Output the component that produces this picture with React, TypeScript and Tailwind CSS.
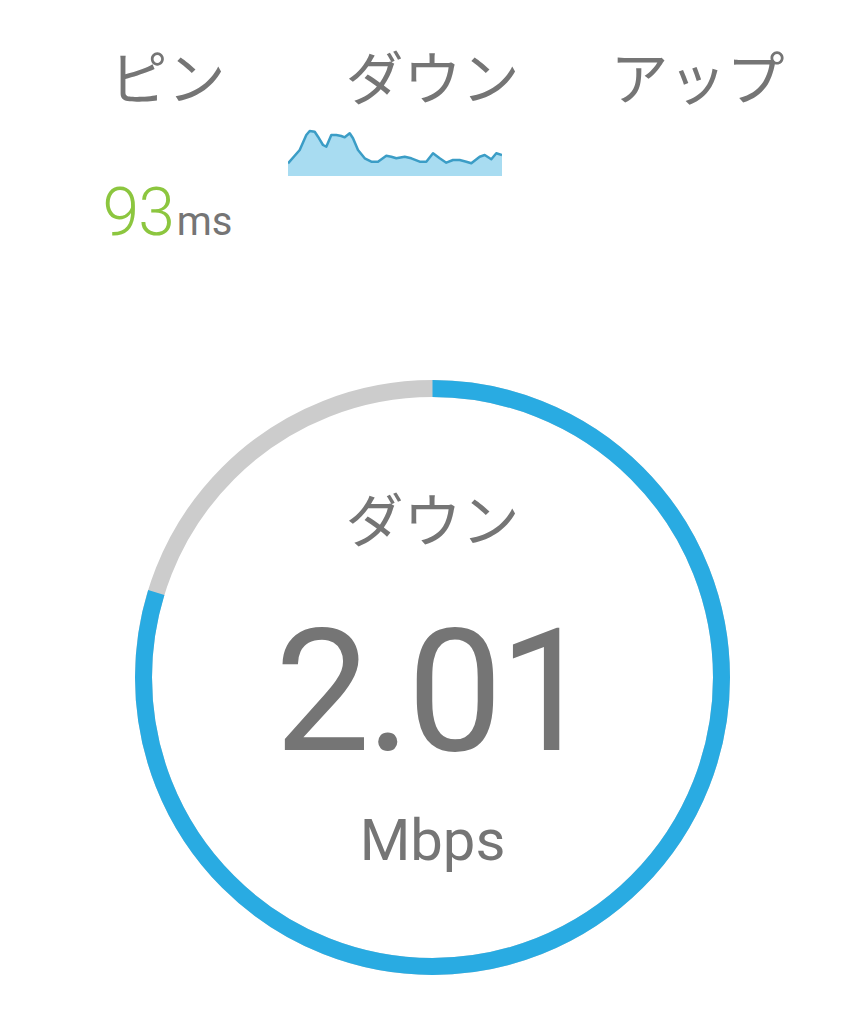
const pts: [number, number][] = [
  [0, 37.3], [11.7, 24], [18.3, 9], [21.7, 5], [26.7, 5.7], [30, 10.7], [35, 19],
  [38.3, 20.7], [43.3, 9], [48.3, 9], [53.3, 10], [56.7, 11.3], [61.7, 7.3], [65, 12.3],
  [70, 24], [76.7, 32.3], [83.3, 35.7], [90, 35.7], [98.3, 29.7], [103.3, 30.7],
  [108.3, 32.3], [116.7, 30.7], [123.3, 32.3], [131.7, 35.7], [138.3, 35.7], [145, 27.3],
  [151.7, 32.3], [158.3, 36.7], [165, 34], [171.7, 34], [178.3, 35.7], [183.3, 37.3],
  [191.7, 30.7], [196.7, 29], [203.3, 33.3], [208.3, 27.3], [214, 29],
];

function Sparkline() {
  const line = pts.map(([x, y], i) => `${i ? "L" : "M"}${x} ${y}`).join(" ");
  const area = `${line} L214 50 L0 50 Z`;
  return (
    <svg width="214" height="50" viewBox="0 0 214 50">
      <path d={area} fill="#a8dcf1" />
      <path d={line} fill="none" stroke="#3b9dc6" strokeWidth="2.5" strokeLinejoin="round" />
    </svg>
  );
}

function Gauge() {
  const r = 289;
  const c = 2 * Math.PI * r;
  const blue = (c * 287) / 360;
  return (
    <div className="relative mx-auto w-[595px] h-[595px]">
      <svg className="absolute inset-0" width="595" height="595" viewBox="0 0 595 595">
        <circle cx="297.5" cy="297.5" r={r} fill="none" stroke="#cccccc" strokeWidth="17" />
        <circle
          cx="297.5"
          cy="297.5"
          r={r}
          fill="none"
          stroke="#29abe2"
          strokeWidth="17"
          strokeDasharray={`${blue} ${c}`}
          transform="rotate(-90 297.5 297.5)"
        />
      </svg>
      <div className="relative flex flex-col items-center pt-[108px] text-[#757575]">
        <div className="text-[58px] leading-none font-['Noto_Sans_CJK_JP',sans-serif]">
          ダウン
        </div>
        <div className="mt-[61px] text-[170px] leading-none font-['Roboto',sans-serif] tracking-[-4px]">
          2.01
        </div>
        <div className="mt-[34px] text-[58px] leading-none font-['Roboto',sans-serif]">
          Mbps
        </div>
      </div>
    </div>
  );
}

export default function App() {
  return (
    <div className="w-full h-[1024px] bg-white overflow-hidden">
      <div className="px-[35px] pt-[46px]">
        <div className="grid grid-cols-3 text-[58px] leading-none text-[#757575] font-['Noto_Sans_CJK_JP',sans-serif]">
          <div className="text-center">ピン</div>
          <div className="text-center">ダウン</div>
          <div className="text-center">アップ</div>
        </div>
        <div className="grid grid-cols-3 mt-[22px]">
          <div />
          <div className="-ml-[12px]">
            <Sparkline />
          </div>
        </div>
        <div className="grid grid-cols-3 pt-[4px]">
          <div className="flex justify-center items-baseline font-['Roboto',sans-serif] leading-none">
            <span className="text-[66px] text-[#8cc63f] font-light tracking-[-1px]">93</span>
            <span className="text-[40px] text-[#757575] ml-[3px]">ms</span>
          </div>
        </div>
      </div>
      <div className="mt-[134px]">
        <Gauge />
      </div>
    </div>
  );
}
